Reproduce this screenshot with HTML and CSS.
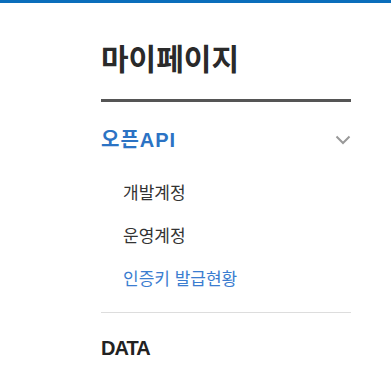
FILE: index.html
```html
<!DOCTYPE html>
<html lang="ko">
<head>
    <meta charset="UTF-8">
    <meta name="viewport" content="width=device-width, initial-scale=1.0">
    <title>마이페이지</title>
    <link rel="stylesheet" href="styles.css">
</head>
<body>
    <div class="topbar"></div>
    <!-- 좌측 메뉴 -->
    <div class="snb">
        <h2 class="snb-tit">마이페이지</h2>
        <ul class="depth1">
            <li class="on">
                <a href="#" class="d1-link">
                    <span class="ko">오픈API</span>
                    <svg class="arr" width="16" height="10" viewBox="0 0 16 10">
                        <polyline points="1.5,1.5 8,8 14.5,1.5"></polyline>
                    </svg>
                </a>
                <ul class="depth2">
                    <li><a href="#">개발계정</a></li>
                    <li><a href="#">운영계정</a></li>
                    <li class="on"><a href="#">인증키 발급현황</a></li>
                </ul>
            </li>
            <li>
                <a href="#" class="d1-link"><span class="en">DATA</span></a>
            </li>
        </ul>
    </div>
</body>
</html>
```

FILE: styles.css
```css
html,body{
    margin: 0;
    padding: 0;
}
body{
    font-family: "Noto Sans CJK KR", "Noto Sans", sans-serif;
    color: #333;
    background: #fff;
}
ul{
    list-style: none;
    margin: 0;
    padding: 0;
}
a{
    color: inherit;
    text-decoration: none;
}
/* 상단 라인 */
.topbar{
    height: 3px;
    background: #0b6ebb;
}
/* 좌측 메뉴 */
.snb{
    width: 250px;
    margin-left: 101px;
}
.snb-tit{
    margin: 0;
    padding: 36px 0 24px;
    font-size: 30px;
    line-height: 36px;
    font-weight: 700;
    color: #2a2a2a;
    border-bottom: 3px solid #555;
}
.depth1>li{
    border-bottom: 1px solid #ddd;
}
.depth1>li:last-child{
    border-bottom: 0;
}
.d1-link{
    display: flex;
    justify-content: space-between;
    align-items: center;
    padding: 25px 0 17px;
    font-family: "Liberation Sans", "Noto Sans CJK KR", sans-serif;
    font-size: 20px;
    line-height: 26px;
    font-weight: 700;
    color: #222;
}
.on .d1-link{
    color: #2b73c4;
}
.d1-link .ko{
    letter-spacing: 1px;
}
.d1-link .en{
    letter-spacing: -1px;
}
.depth1>li:last-child .d1-link{
    padding-top: 22px;
}
.arr polyline{
    fill: none;
    stroke: #999;
    stroke-width: 2;
}
.depth2{
    padding: 0 0 13px 22px;
}
.depth2 li a{
    display: block;
    font-size: 17px;
    line-height: 43px;
    color: #333;
}
.depth2 li.on a{
    color: #3b7dd0;
}
```
